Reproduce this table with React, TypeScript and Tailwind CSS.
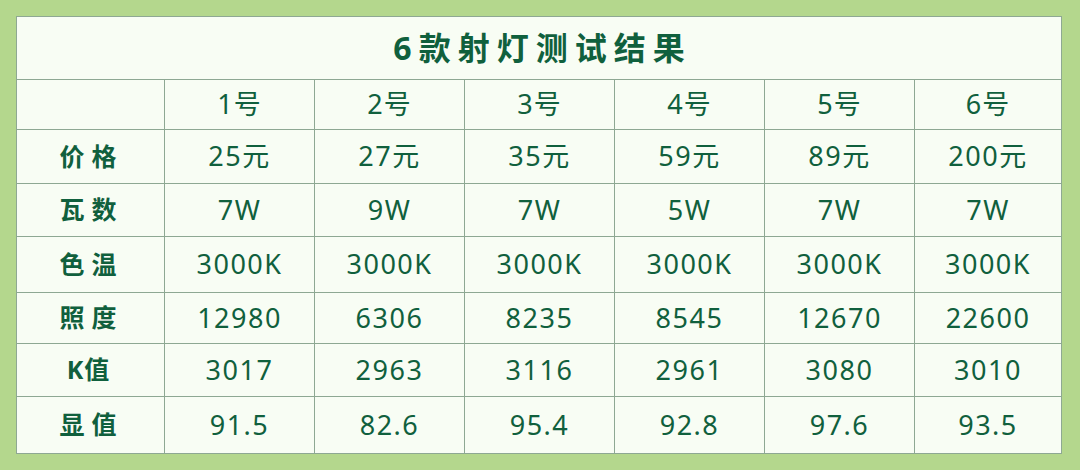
const cols = ["1号", "2号", "3号", "4号", "5号", "6号"];

const rows: { label: string; tight?: boolean; values: string[] }[] = [
  { label: "价格", values: ["25元", "27元", "35元", "59元", "89元", "200元"] },
  { label: "瓦数", values: ["7W", "9W", "7W", "5W", "7W", "7W"] },
  { label: "色温", values: ["3000K", "3000K", "3000K", "3000K", "3000K", "3000K"] },
  { label: "照度", values: ["12980", "6306", "8235", "8545", "12670", "22600"] },
  { label: "K值", tight: true, values: ["3017", "2963", "3116", "2961", "3080", "3010"] },
  { label: "显值", values: ["91.5", "82.6", "95.4", "92.8", "97.6", "93.5"] },
];

const font = { fontFamily: '"Noto Sans", "Noto Sans CJK SC", sans-serif' };

export default function App() {
  return (
    <div className="h-[470px] w-[1080px] bg-[#b4d78d] pt-[16px] pl-[16px]" style={font}>
      <div className="grid w-[1046px] grid-cols-[147px_repeat(5,149px)_146px] grid-rows-[62px_49px_53px_52px_55px_50px_52px_56px] gap-px border border-[#8ea893] bg-[#8ea893] text-[#10603d]">
        <div className="col-span-7 flex items-center justify-center bg-[#f8fdf4] text-[32px] font-bold tracking-[7px] pl-[7px]">
          6款射灯测试结果
        </div>
        <div className="bg-[#f8fdf4]" />
        {cols.map((c) => (
          <div key={c} className="flex items-center justify-center bg-[#f8fdf4] text-[27px] tracking-[1px]">
            {c}
          </div>
        ))}
        {rows.map((r) => (
          <>
            <div
              key={r.label}
              className={
                r.tight
                  ? "flex items-center justify-center bg-[#f8fdf4] text-[25px] font-bold tracking-[1px] pr-[4px]"
                  : "flex items-center justify-center bg-[#f8fdf4] text-[25px] font-bold tracking-[7px] pl-[2px]"
              }
            >
              {r.label}
            </div>
            {r.values.map((v, i) => (
              <div key={r.label + i} className="flex items-center justify-center bg-[#f8fdf4] text-[27px] tracking-[1.5px]">
                {v}
              </div>
            ))}
          </>
        ))}
      </div>
    </div>
  );
}
